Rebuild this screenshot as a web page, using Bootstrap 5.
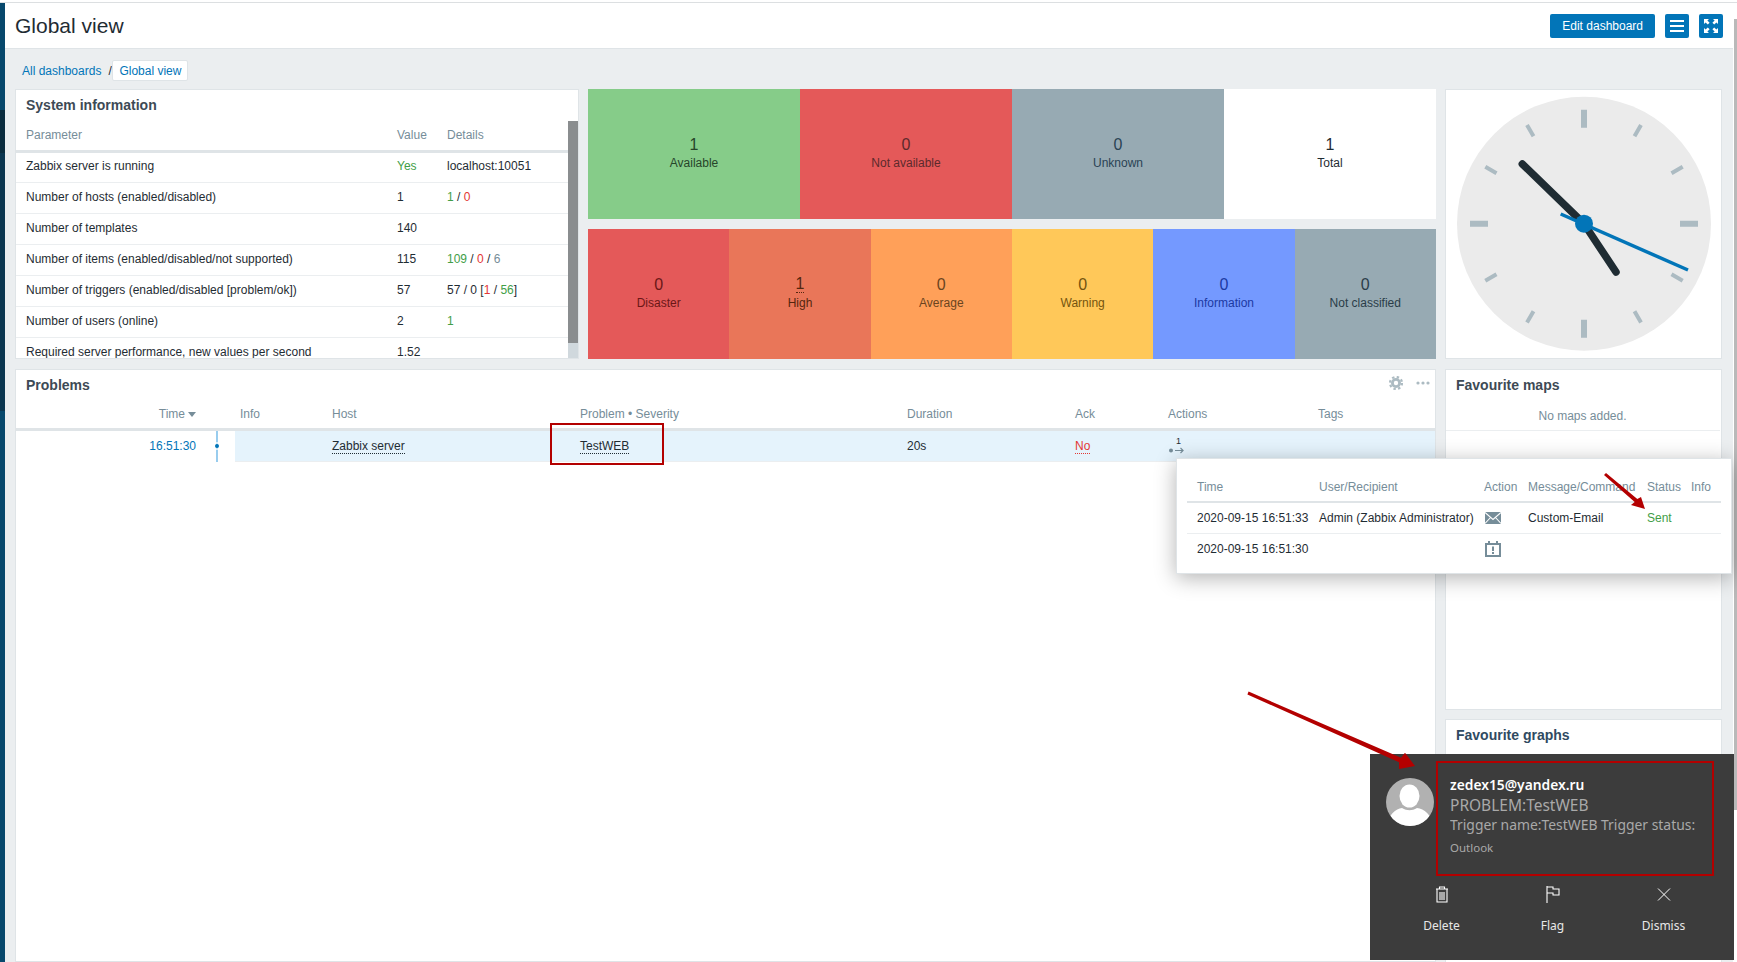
<!DOCTYPE html>
<html lang="en">
<head>
<meta charset="utf-8">
<title>Global view</title>
<link href="https://cdn.jsdelivr.net/npm/bootstrap@5.3.0/dist/css/bootstrap.min.css" rel="stylesheet">
<style>
html,body{height:962px;overflow:hidden}
body{font-family:"Liberation Sans",Arial,sans-serif;font-size:12px;color:#1f2c33;background:#fff;position:relative}
a{color:#0275b8;text-decoration:none}
.top-edge{height:3px;background:linear-gradient(#fff 0 2px,#dcdfe1 2px)}
.shell{height:959px}
.side-strip{width:5px;flex:none;background:linear-gradient(#07486c 0 107px,#0a2c3e 107px 150px,#0b3650 150px 408px,#07486c 408px);position:relative}
.workspace{width:1728px;flex:none;background:#ebeef0;overflow:hidden}
.scroll-edge{width:4px;flex:none;background:#fff;padding:16px 0 0 1px}
.scroll-edge i{display:block;width:3px;height:791px;background:#b9b9b9}
.page-head{height:46px;background:#fff;border-bottom:1px solid #dfe4e7;padding:0 10px 0 10px}
.page-title{font-size:21px;font-weight:400;margin:0;line-height:1;color:#1f2c33}
.z-btn{height:24px;background:#0275b8;border:0;border-radius:2px;color:#fff;font-size:12px;padding:0 12px;line-height:24px}
.z-btn:hover{background:#0275b8;color:#fff}
.z-icon-btn{width:24px;padding:0;display:flex;align-items:center;justify-content:center}
.crumbs{padding:11px 0 0 17px;height:40px}
.crumbs .breadcrumb-item{padding:0;font-size:12px;line-height:22px;display:flex}
.crumbs .breadcrumb-item+.breadcrumb-item::before{padding:0;float:none;color:#1f2c33;content:"/";width:10px;margin-left:7px;margin-right:-1px;text-align:left}
.crumbs .active-tab{background:#fff;border:1px solid #dfe4e7;border-radius:2px;padding:0 6px;line-height:20px;height:21px;display:block;margin-left:-5px}
.board{padding-left:10px;display:grid;grid-template-columns:564px 848px 277px;column-gap:9px;grid-template-rows:270px auto;row-gap:10px}
.z-widget{background:#fff;outline:1px solid #dfe4e7;outline-offset:-1px;overflow:hidden}
.widget-head{height:32px;padding:0 11px;display:flex;align-items:center;justify-content:space-between;flex:none}
.widget-title{font-size:14px;font-weight:700;margin:0;color:#3d4a55;line-height:1}
.sys-body{height:238px}
.sys-clip{width:553px;flex:none;overflow:hidden}
.sys-track{width:10px;flex:none;background:#d0d8dd}
.sys-track i{display:block;height:222px;background:#8a8d8f}
table.z-table{table-layout:fixed;margin:0;--bs-table-bg:transparent;--bs-table-color:#1f2c33;font-size:12px;color:#1f2c33}
table.z-table th{font-weight:400;color:#768d99;padding:0 0 0 5px;height:28px;vertical-align:middle;border-bottom:3px solid #dfe4e7;line-height:1.2}
table.z-table td{padding:0 0 0 5px;height:31px;vertical-align:middle;border-bottom:1px solid #ebeef0;line-height:1.2}
.sys-clip table.z-table th{height:30px}
.sys-clip table.z-table th:first-child,.sys-clip table.z-table td:first-child{padding-left:11px}
.sys-clip table.z-table tbody tr:first-child td{padding-bottom:2px}
.status-stack{display:flex;flex-direction:column;gap:10px}
.tile-row{height:130px;display:flex}
.status-tile{flex:1 1 0;display:flex;flex-direction:column;align-items:center;justify-content:center;font-size:12px;line-height:1.2;padding-bottom:2px}
.status-tile b{font-weight:400;font-size:16px;line-height:18px;margin-bottom:2px}
.dot-under{border-bottom:1px dotted currentColor}
.clock-box{display:flex;align-items:center;justify-content:center}
.problems{grid-column:1 / span 2;height:593px}
.side-col{display:flex;flex-direction:column;gap:9px}
.fav-maps{height:341px}
.fav-graphs{height:300px}
.fav-empty{height:30px;margin-right:2px;border-bottom:1px solid #ebeef0;color:#768d99;display:flex;align-items:center;justify-content:center}
.prob-row td{background:#e5f3fc}
table.z-table .time-cell{text-align:right;padding:0 10px 0 0;background:#fff;border-bottom:0}
table.z-table .time-head{text-align:right;padding:0 10px 0 0}
table.z-table .tl-cell{background:#fff;padding:0;border-bottom:0}
.tl-cell svg{display:block}
.txt-green{color:#429e47}.txt-red{color:#e33734}.txt-grey{color:#768d99}.txt-blue{color:#0275b8}
.sort-tri{display:inline-block;width:0;height:0;border:4px solid transparent;border-top:5px solid #768d99;border-bottom:0;margin-left:3px;vertical-align:1px}
.action-mark{position:relative;display:block;width:18px;height:18px}
.action-mark span{position:absolute;left:8px;top:-1px;font-size:9px;line-height:11px}
.action-mark svg{position:absolute;left:0;top:10px}
.history-pop{position:absolute;left:1176px;top:458px;width:556px;height:116px;background:#fff;border:1px solid #dfe4e7;box-shadow:0 4px 20px rgba(0,0,0,.3);padding:14px 10px 0}
.history-pop table.z-table th{border-bottom-width:2px;height:29px}
.history-pop table.z-table th:first-child,.history-pop table.z-table td:first-child{padding-left:10px}
.history-pop table.z-table td svg{display:block;margin-left:1px}
.history-pop .last-line td{border-bottom:0}
.toast-box{position:absolute;left:1370px;top:754px;width:364px;height:206px;background:#3c3c3c;color:#fff;font-family:"Noto Sans","Open Sans",sans-serif}
.toast-main{padding:24px 16px 0;height:126px}
.toast-avatar{width:48px;height:48px;flex:none;margin-right:16px}
.toast-copy{width:246px;overflow:hidden;white-space:nowrap}
.toast-from{font-size:13.8px;font-weight:600;line-height:20px;color:#fff;margin-top:-3px}
.toast-head-line{font-size:15.5px;line-height:20px;color:#a9a9a9}
.toast-line{font-size:13.9px;line-height:20px;color:#a9a9a9}
.toast-app{font-size:11.5px;line-height:16px;color:#a9a9a9;margin-top:5px}
.toast-acts{padding:0 15px 0 16px}
.toast-act{flex:1 1 0;display:flex;flex-direction:column;align-items:center;font-size:12px;color:#e8e8e8}
.toast-act svg{display:block;height:20px;margin-top:5px;margin-bottom:12px}
.mark-layer{position:absolute;left:0;top:0;pointer-events:none}
</style>
</head>
<body>
<div class="top-edge"></div>
<div class="shell d-flex">
  <div class="side-strip"></div>
  <div class="workspace">
    <header class="page-head d-flex align-items-center justify-content-between">
      <h1 class="page-title">Global view</h1>
      <div class="d-flex" style="gap:10px">
        <button class="btn z-btn" type="button">Edit dashboard</button>
        <button class="btn z-btn z-icon-btn" type="button" aria-label="Menu">
          <svg width="14" height="12" viewBox="0 0 14 12"><path d="M0 1h14M0 6h14M0 11h14" stroke="#fff" stroke-width="2"/></svg>
        </button>
        <button class="btn z-btn z-icon-btn" type="button" aria-label="Fullscreen">
          <svg width="14" height="14" viewBox="0 0 14 14" fill="#fff"><path d="M0 0h5L3.400 1.600 5.600 3.800 3.800 5.600 1.600 3.400 0 5zM14 0v5l-1.600-1.600-2.200 2.200-1.800-1.800 2.200-2.200L9 0zM0 14V9l1.600 1.600 2.200-2.200 1.800 1.800-2.200 2.200L5 14zM14 14H9l1.600-1.600-2.200-2.200 1.800-1.800 2.200 2.200L14 9z"/></svg>
        </button>
      </div>
    </header>
    <nav class="crumbs">
      <ol class="breadcrumb mb-0">
        <li class="breadcrumb-item"><a href="#">All dashboards</a></li>
        <li class="breadcrumb-item"><a class="active-tab" href="#">Global view</a></li>
      </ol>
    </nav>
    <main class="board">
      <section class="z-widget">
        <div class="widget-head"><h4 class="widget-title">System information</h4></div>
        <div class="sys-body d-flex">
          <div class="sys-clip">
            <table class="table z-table">
              <colgroup><col style="width:377px"><col style="width:50px"><col></colgroup>
              <thead><tr><th>Parameter</th><th>Value</th><th>Details</th></tr></thead>
              <tbody>
                <tr><td>Zabbix server is running</td><td class="txt-green">Yes</td><td>localhost:10051</td></tr>
                <tr><td>Number of hosts (enabled/disabled)</td><td>1</td><td><span class="txt-green">1</span> / <span class="txt-red">0</span></td></tr>
                <tr><td>Number of templates</td><td>140</td><td></td></tr>
                <tr><td>Number of items (enabled/disabled/not supported)</td><td>115</td><td><span class="txt-green">109</span> / <span class="txt-red">0</span> / <span class="txt-grey">6</span></td></tr>
                <tr><td>Number of triggers (enabled/disabled [problem/ok])</td><td>57</td><td>57 / 0 [<span class="txt-red">1</span> / <span class="txt-green">56</span>]</td></tr>
                <tr><td>Number of users (online)</td><td>2</td><td><span class="txt-green">1</span></td></tr>
                <tr><td>Required server performance, new values per second</td><td>1.52</td><td></td></tr>
              </tbody>
            </table>
          </div>
          <div class="sys-track"><i></i></div>
        </div>
      </section>

      <section class="status-stack">
        <div class="tile-row">
          <div class="status-tile" style="background:#86cc89;color:#27452a"><b>1</b>Available</div>
          <div class="status-tile" style="background:#e45959;color:#5c2a2c"><b>0</b>Not available</div>
          <div class="status-tile" style="background:#97aab3;color:#2a4354"><b>0</b>Unknown</div>
          <div class="status-tile" style="background:#fff;color:#1f2c33"><b>1</b>Total</div>
        </div>
        <div class="tile-row">
          <div class="status-tile" style="background:#e45959;color:#6b1717"><b>0</b>Disaster</div>
          <div class="status-tile" style="background:#e97659;color:#54260f"><b class="dot-under" style="line-height:16px;margin-bottom:3px">1</b>High</div>
          <div class="status-tile" style="background:#ffa059;color:#6a4420"><b>0</b>Average</div>
          <div class="status-tile" style="background:#ffc859;color:#74540f"><b>0</b>Warning</div>
          <div class="status-tile" style="background:#7499ff;color:#1c3aa3"><b>0</b>Information</div>
          <div class="status-tile" style="background:#97aab3;color:#2a3d49"><b>0</b>Not classified</div>
        </div>
      </section>

      <section class="z-widget clock-box">
        <svg width="277" height="270" viewBox="0 0 277 270" role="img" aria-label="Clock">
          <circle cx="139" cy="134.7" r="127" fill="#ebebeb"/>
          <g transform="translate(139 134.7)">
            <g stroke="#acbbc2" stroke-width="6">
              <path d="M0-114V-96M0 114V96M114 0H96M-114 0H-96"/>
            </g>
            <g stroke="#acbbc2" stroke-width="4">
              <path d="M50.500-87.500 57-98.700M87.500-50.500 98.700-57M87.500 50.500 98.700 57M50.500 87.500 57 98.700M-50.500 87.500-57 98.700M-87.500 50.500-98.700 57M-87.500-50.500-98.700-57M-50.500-87.500-57-98.700"/>
            </g>
            <g stroke="#1f2c33" stroke-width="7.500" stroke-linecap="round">
              <path d="M0 0-61.700-59.700M0 0 32 48.300"/>
            </g>
            <path d="M-23.300-9.700 104 46.300" stroke="#0275b8" stroke-width="3.500"/>
            <circle r="9" fill="#0275b8"/>
          </g>
        </svg>
      </section>

      <section class="z-widget problems">
        <div class="widget-head">
          <h4 class="widget-title">Problems</h4>
          <div class="d-flex align-items-center" style="gap:13px;margin-right:-5px;margin-top:-4px">
            <svg width="14" height="14" viewBox="0 0 14 14"><circle cx="7" cy="7" r="3.600" fill="none" stroke="#acbbc2" stroke-width="2.800"/><circle cx="7" cy="7" r="6" fill="none" stroke="#acbbc2" stroke-width="2.200" stroke-dasharray="2.400 2.310"/></svg>
            <svg width="14" height="4" viewBox="0 0 14 4" fill="#acbbc2"><circle cx="2" cy="2" r="1.600"/><circle cx="7" cy="2" r="1.600"/><circle cx="12" cy="2" r="1.600"/></svg>
          </div>
        </div>
        <table class="table z-table">
          <colgroup><col style="width:191px"><col style="width:29px"><col style="width:92px"><col style="width:248px"><col style="width:327px"><col style="width:168px"><col style="width:93px"><col style="width:150px"><col></colgroup>
          <thead><tr>
            <th class="time-head">Time<span class="sort-tri"></span></th><th></th><th>Info</th><th>Host</th><th>Problem • Severity</th><th>Duration</th><th>Ack</th><th>Actions</th><th>Tags</th>
          </tr></thead>
          <tbody>
            <tr class="prob-row">
              <td class="time-cell txt-blue">16:51:30</td>
              <td class="tl-cell"><svg width="29" height="31" viewBox="0 0 29 31"><path d="M11 0V31" stroke="#7fc0ea" stroke-width="1.600"/><circle cx="11" cy="15" r="2" fill="#0275b8"/><circle cx="11" cy="15" r="3.200" fill="none" stroke="#fff" stroke-width="1.200"/></svg></td>
              <td></td>
              <td><span class="dot-under">Zabbix server</span></td>
              <td><span class="dot-under">TestWEB</span></td>
              <td>20s</td>
              <td><span class="txt-red dot-under">No</span></td>
              <td><span class="action-mark"><span>1</span><svg width="17" height="7" viewBox="0 0 17 7"><circle cx="3" cy="3.500" r="2" fill="#768d99"/><path d="M7 3.500h8M12.500 1l2.600 2.500L12.500 6" fill="none" stroke="#768d99" stroke-width="1.100"/></svg></span></td>
              <td></td>
            </tr>
          </tbody>
        </table>
      </section>

      <aside class="side-col">
        <section class="z-widget fav-maps">
          <div class="widget-head"><h4 class="widget-title">Favourite maps</h4></div>
          <div class="fav-empty">No maps added.</div>
        </section>
        <section class="z-widget fav-graphs">
          <div class="widget-head"><h4 class="widget-title" style="color:#2f4a62">Favourite graphs</h4></div>
        </section>
      </aside>
    </main>
  </div>
  <div class="scroll-edge"><i></i></div>
</div>

<div class="history-pop">
  <table class="table z-table">
    <colgroup><col style="width:127px"><col style="width:165px"><col style="width:44px"><col style="width:119px"><col style="width:44px"><col></colgroup>
    <thead><tr><th>Time</th><th>User/Recipient</th><th>Action</th><th>Message/Command</th><th>Status</th><th>Info</th></tr></thead>
    <tbody>
      <tr>
        <td>2020-09-15 16:51:33</td><td>Admin (Zabbix Administrator)</td>
        <td><svg width="16" height="12" viewBox="0 0 16 12"><rect width="16" height="12" fill="#768d99"/><path d="M0 .500 8 7.500 16 .500M0 11.500 5.500 5.500M16 11.500 10.500 5.500" fill="none" stroke="#fff" stroke-width="1.100"/></svg></td>
        <td>Custom-Email</td><td class="txt-green">Sent</td><td></td>
      </tr>
      <tr class="last-line">
        <td>2020-09-15 16:51:30</td><td></td>
        <td><svg width="16" height="16" viewBox="0 0 16 16"><path d="M1 3h14v12H1z" fill="none" stroke="#768d99" stroke-width="2"/><path d="M4 0v3M12 0v3" stroke="#768d99" stroke-width="2"/><path d="M8 5.500v4.500M8 11v2" stroke="#768d99" stroke-width="2"/></svg></td>
        <td></td><td></td><td></td>
      </tr>
    </tbody>
  </table>
</div>

<aside class="toast-box">
  <div class="toast-main d-flex">
    <svg class="toast-avatar" viewBox="0 0 48 48" aria-hidden="true"><defs><clipPath id="avatarClip"><circle cx="24" cy="24" r="24"/></clipPath></defs><circle cx="24" cy="24" r="24" fill="#b1b1b1"/><g clip-path="url(#avatarClip)" fill="#fff"><ellipse cx="23.500" cy="18" rx="10" ry="11.500"/><path d="M2 48c0-12 8-17 14-18 5 3 10 3 15 0 7 1 15 6 15 18z"/></g></svg>
    <div class="toast-copy">
      <div class="toast-from">zedex15@yandex.ru</div>
      <div class="toast-head-line">PROBLEM:TestWEB</div>
      <div class="toast-line">Trigger name:TestWEB Trigger status:PROBLEM</div>
      <div class="toast-app">Outlook</div>
    </div>
  </div>
  <div class="toast-acts d-flex">
    <div class="toast-act">
      <svg width="14" height="20" viewBox="0 0 14 20" fill="none" stroke="#fff" stroke-width="1.100"><path d="M1 4h12M2 4v13h10V4M4.500 4V2h5v2M5 7v8M7 7v8M9 7v8"/></svg>
      Delete
    </div>
    <div class="toast-act">
      <svg width="14" height="20" viewBox="0 0 14 20" fill="none" stroke="#fff" stroke-width="1.100"><path d="M1 1v17M1 2h6v2h6v6H7V8H1"/></svg>
      Flag
    </div>
    <div class="toast-act">
      <svg width="14" height="20" viewBox="0 0 14 20" fill="none" stroke="#fff" stroke-width="1"><path d="M1 3.500 13 15.500M13 3.500 1 15.500"/></svg>
      Dismiss
    </div>
  </div>
</aside>

<svg class="mark-layer" width="1737" height="962" viewBox="0 0 1737 962" aria-hidden="true">
  <g fill="none" stroke="#b30000" stroke-width="2">
    <rect x="551" y="424" width="112" height="40"/>
    <rect x="1437" y="762" width="276" height="113"/>
  </g>
  <g fill="#b30000">
    <path d="M1606 472.900 1637.300 499 1641 497 1645 509 1631 505 1634.700 502 1604 475.100z"/>
    <path d="M1248.600 691.600 1401 757.700 1405 752.700 1415 766 1399 769 1399 762.300 1247.400 694.400z"/>
  </g>
</svg>
<script src="https://cdn.jsdelivr.net/npm/bootstrap@5.3.0/dist/js/bootstrap.bundle.min.js"></script>
</body>
</html>
